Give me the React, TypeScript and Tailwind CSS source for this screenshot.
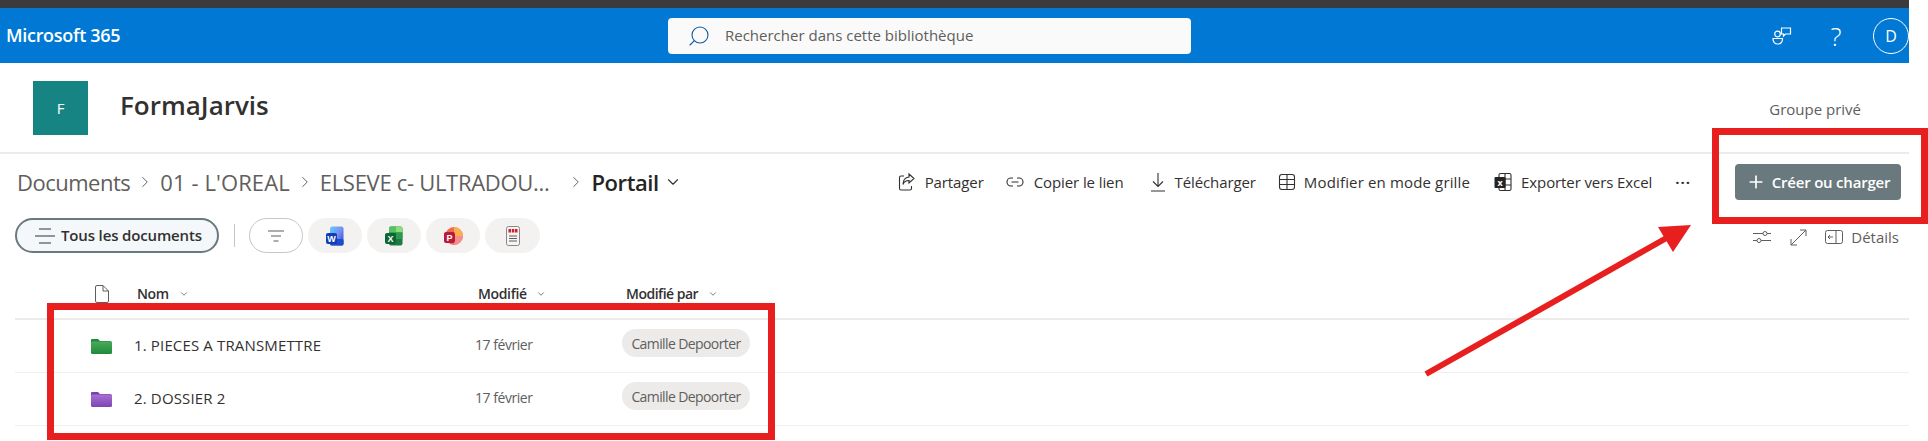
import React from "react";
import { ChevronRight, ChevronDown, Search, Plus } from "lucide-react";

function Feedback() {
  return (
    <svg width="20" height="18" viewBox="0 0 20 18" className="text-white" fill="none" stroke="currentColor" strokeWidth="1.2">
      <circle cx="5.500" cy="7" r="2.800" />
      <path d="M1 11.500h9.500c0 3.500-1.800 5.500-4.700 5.500S1 15 1 11.500z" />
      <path d="M9.500 1h9v6h-5l-2 2V7h-2z" />
    </svg>
  );
}

function ActionIcon({ kind }: { kind: string }) {
  const p = { width: 18, height: 20, viewBox: "0 0 18 20", fill: "none", stroke: "#323130", strokeWidth: 1.1 };
  if (kind === "share")
    return (
      <svg {...p}>
        <path d="M6 4H3a1.500 1.500 0 0 0-1.500 1.500v11A1.500 1.500 0 0 0 3 18h9a1.500 1.500 0 0 0 1.500-1.500V14" />
        <path d="M11 2l5 4.500-5 4.500V8.500c-3 0-5 1-6 4 0-4.500 2-7 6-7.500z" />
      </svg>
    );
  if (kind === "link")
    return (
      <svg {...p}>
        <path d="M7 6H5a4 4 0 0 0 0 8h2M11 6h2a4 4 0 0 1 0 8h-2M5.500 10h7" />
      </svg>
    );
  if (kind === "down")
    return (
      <svg {...p}>
        <path d="M9 1v13M4 9.500l5 5 5-5M2 19h14" />
      </svg>
    );
  if (kind === "grid")
    return (
      <svg {...p}>
        <rect x="1.500" y="2.500" width="15" height="15" rx="2.500" />
        <path d="M1.500 7.500h15M1.500 12.500h15M9 2.500v15" />
      </svg>
    );
  return (
    <svg {...p}>
      <rect x="5" y="1.500" width="12" height="17" rx="1.500" />
      <path d="M5 7h12M5 13h12M11 1.500v17" />
      <rect x="0.500" y="5" width="11" height="11" rx="1" fill="#252423" stroke="none" />
      <text x="6" y="13.500" fontSize="9" fontWeight="700" fill="#fff" stroke="none" textAnchor="middle">x</text>
    </svg>
  );
}

function Action({ kind, label, iconW, ml, track = "tracking-[-0.1px]" }: { kind: string; label: string; iconW: string; ml: string; track?: string }) {
  return (
    <div className={`flex items-center ${ml}`}>
      <div className={`flex justify-start ${iconW}`}>
        <ActionIcon kind={kind} />
      </div>
      <span className={`text-[15px] text-[#323130] whitespace-nowrap ${track}`}>{label}</span>
    </div>
  );
}

function WordIcon() {
  return (
    <svg width="18" height="20" viewBox="0 0 18 20">
      <defs>
        <linearGradient id="wd" x1="0" y1="0" x2="1" y2="1">
          <stop offset="0" stopColor="#5fd0f8" />
          <stop offset="0.5" stopColor="#7b8cf5" />
          <stop offset="1" stopColor="#1a46c4" />
        </linearGradient>
      </defs>
      <rect x="4" y="0.500" width="13.500" height="19" rx="2" fill="url(#wd)" />
      <rect x="4" y="13" width="13.500" height="6.500" rx="1.500" fill="#1c4bd0" />
      <rect x="0" y="7" width="11" height="11" rx="2" fill="#0f3fb0" />
      <text x="5.500" y="15.500" fontSize="9" fontWeight="700" fill="#fff" textAnchor="middle" fontFamily="Liberation Sans">W</text>
    </svg>
  );
}
function ExcelIcon() {
  return (
    <svg width="18" height="20" viewBox="0 0 18 20">
      <rect x="4" y="0.500" width="13.500" height="19" rx="2" fill="#1d7a45" />
      <path d="M4 2.500a2 2 0 0 1 2-2h5v6H4z" fill="#57c264" />
      <path d="M11 0.500h4.500a2 2 0 0 1 2 2v4H11z" fill="#8fdc7a" />
      <path d="M11 6.500h6.500v6.500H11z" fill="#2c9a55" />
      <rect x="0" y="7" width="11" height="11" rx="2" fill="#0d6534" />
      <text x="5.500" y="15.500" fontSize="9" fontWeight="700" fill="#fff" textAnchor="middle" fontFamily="Liberation Sans">X</text>
    </svg>
  );
}
function PptIcon() {
  return (
    <svg width="19" height="20" viewBox="0 0 19 20">
      <circle cx="10" cy="10" r="9" fill="#ef6a50" />
      <path d="M10 1a9 9 0 0 1 9 9h-9z" fill="#fbae4f" />
      <path d="M10 10h9a9 9 0 0 1-9 9z" fill="#f58f8f" />
      <rect x="0" y="6" width="11" height="11" rx="2" fill="#b81c3a" />
      <text x="5.500" y="14.500" fontSize="9" fontWeight="700" fill="#fff" textAnchor="middle" fontFamily="Liberation Sans">P</text>
    </svg>
  );
}
function PdfIcon() {
  return (
    <svg width="14" height="20" viewBox="0 0 14 20">
      <rect x="0.500" y="0.500" width="13" height="19" rx="2" fill="#f5f4f3" stroke="#8a8886" />
      <rect x="2.500" y="3" width="2.500" height="3.500" fill="#d0212b" />
      <rect x="5.800" y="3" width="2.500" height="3.500" fill="#d0212b" />
      <rect x="9" y="3" width="2.500" height="3.500" fill="#d0212b" />
      <path d="M3 10h8M3 12.500h8M3 15h8" stroke="#605e5c" strokeWidth="1" />
    </svg>
  );
}

function Folder({ id, top, bottom, tab }: { id: string; top: string; bottom: string; tab: string }) {
  return (
    <svg width="21" height="15" viewBox="0 0 21 15">
      <defs>
        <linearGradient id={id} x1="0" y1="0" x2="0" y2="1">
          <stop offset="0" stopColor={top} />
          <stop offset="1" stopColor={bottom} />
        </linearGradient>
      </defs>
      <path d="M1 0h6l2 2h10a2 2 0 0 1 2 2v2H0V1a1 1 0 0 1 1-1z" fill={tab} />
      <rect x="0" y="2.500" width="21" height="12.500" rx="1.500" fill={`url(#${id})`} />
    </svg>
  );
}

function Row({ name, folder }: { name: string; folder: React.ReactNode }) {
  return (
    <div className="h-[53px] border-b border-[#f0efee] flex items-center">
      <div className="w-[119px] pl-[76px] flex">{folder}</div>
      <div className="w-[341px] mb-[1px] text-[15px] text-[#323130] tracking-[0.15px] whitespace-nowrap">{name}</div>
      <div className="w-[147px] mb-[4px] text-[14px] text-[#605e5c] tracking-[-0.45px] whitespace-nowrap">17 février</div>
      <div className="w-[128px] h-[28px] mb-[6px] rounded-full bg-[#edebe9] text-[14px] text-[#605e5c] tracking-[-0.6px] flex items-center justify-center whitespace-nowrap">
        Camille Depoorter
      </div>
    </div>
  );
}

const sep = "w-[18px] h-[18px] text-[#605e5c]";

export default function App() {
  return (
    <div className="relative w-[1928px] h-[441px] overflow-hidden bg-white font-['Open_Sans','Noto_Sans',sans-serif]">
      {/* Suite bar */}
      <div className="w-[1909px]">
        <div className="h-[8px] bg-[#3b3b3b]" />
        <div className="h-[55px] bg-[#0078d4] flex items-center">
          <div className="w-[668px] pl-[6px] text-white text-[18px] font-semibold tracking-[-0.3px]">Microsoft 365</div>
          <div className="w-[523px] h-[36px] bg-[#fafafa] rounded-[4px] flex items-center">
            <Search className="w-[24px] h-[24px] text-[#0f5a9e] ml-[19px] -scale-x-100" strokeWidth={1.1} />
            <span className="ml-[14px] text-[15px] text-[#605e5c]">Rechercher dans cette bibliothèque</span>
          </div>
          <div className="flex-1 flex items-center justify-end">
            <Feedback />
            <span className="ml-[36px] w-[16px] text-center text-white text-[26px] leading-[30px] font-light">?</span>
            <div className="ml-[29px] w-[36px] h-[36px] rounded-full border border-white text-white text-[16px] flex items-center justify-center">D</div>
          </div>
        </div>
      </div>

      {/* Site header */}
      <div className="w-[1909px] h-[91px] border-b-2 border-[#edebe9] flex items-start pl-[33px] pt-[18px]">
        <div className="w-[55px] h-[54px] bg-[#158482] flex items-center justify-center text-white text-[15px]">F</div>
        <div className="ml-[32px] mt-[6px] text-[26px] leading-[36px] font-semibold text-[#323130]">FormaJarvis</div>
        <div className="ml-auto mr-[48px] mt-[17px] text-[15px] text-[#605e5c]">Groupe privé</div>
      </div>

      {/* Command bar */}
      <div className="w-[1909px] h-[36px] mt-[10px] flex items-center">
        <div className="flex items-center pl-[17px] text-[22px] text-[#605e5c] whitespace-nowrap">
          <span className="tracking-[-0.5px]">Documents</span>
          <ChevronRight className={`${sep} mx-[6px]`} strokeWidth={1.3} />
          <span className="tracking-[0.1px]">01 - L'OREAL</span>
          <ChevronRight className={`${sep} mx-[6px]`} strokeWidth={1.3} />
          <span className="tracking-[-0.3px]">ELSEVE c- ULTRADOU...</span>
          <ChevronRight className={`${sep} ml-[18px] mr-[6px]`} strokeWidth={1.3} />
          <span className="font-semibold text-[#252423] tracking-[-0.4px]">Portail</span>
          <ChevronDown className="w-[18px] h-[18px] ml-[5px] text-[#323130]" strokeWidth={1.5} />
        </div>
        <div className="ml-auto flex items-center">
          <Action kind="share" label="Partager" iconW="w-[27px]" ml="" />
          <Action kind="link" label="Copier le lien" iconW="w-[28px]" ml="ml-[22px]" />
          <Action kind="down" label="Télécharger" iconW="w-[26px]" ml="ml-[25px]" />
          <Action kind="grid" label="Modifier en mode grille" iconW="w-[26px]" ml="ml-[22px]" track="tracking-[0.15px]" />
          <Action kind="xl" label="Exporter vers Excel" iconW="w-[27px]" ml="ml-[24px]" />
          <span className="ml-[23px] text-[15px] font-bold text-[#323130] tracking-[1px]">···</span>
          <button className="ml-[44px] mr-[8px] w-[166px] h-[36px] rounded-[4px] bg-[#69797e] text-white text-[15px] font-semibold tracking-[-0.2px] flex items-center justify-center">
            <Plus className="w-[20px] h-[20px] mr-[6px]" strokeWidth={2} />
            Créer ou charger
          </button>
        </div>
      </div>

      {/* Filter row */}
      <div className="w-[1909px] h-[35px] mt-[18px] flex items-center pl-[15px]">
        <div className="w-[204px] h-[35px] rounded-full border-2 border-[#69797e] bg-[#f5f8fa] flex items-center">
          <svg width="20" height="16" viewBox="0 0 20 16" className="ml-[18px]" stroke="#323130" strokeWidth="1.100" fill="none">
            <path d="M4 1h12M0 8h20M4 15h12" />
          </svg>
          <span className="ml-[6px] text-[15px] font-semibold text-[#323130] tracking-[-0.15px] whitespace-nowrap">Tous les documents</span>
        </div>
        <div className="w-px h-[23px] bg-[#c8c6c4] ml-[15px]" />
        <div className="ml-[14px] w-[54px] h-[35px] rounded-full border border-[#c8c6c4] flex items-center justify-center">
          <svg width="16" height="12" viewBox="0 0 16 12" stroke="#605e5c" strokeWidth="1.100" fill="none">
            <path d="M0 1h16M3 6h10M5.500 11h5" />
          </svg>
        </div>
        <div className="ml-[5px] w-[54px] h-[35px] rounded-full bg-[#f3f2f1] flex items-center justify-center"><WordIcon /></div>
        <div className="ml-[5px] w-[54px] h-[35px] rounded-full bg-[#f3f2f1] flex items-center justify-center"><ExcelIcon /></div>
        <div className="ml-[5px] w-[54px] h-[35px] rounded-full bg-[#f3f2f1] flex items-center justify-center"><PptIcon /></div>
        <div className="ml-[5px] w-[55px] h-[35px] rounded-full bg-[#f3f2f1] flex items-center justify-center"><PdfIcon /></div>
        <div className="ml-auto mr-[10px] flex items-center mt-[3px]">
          <svg width="18" height="14" viewBox="0 0 18 14" stroke="#605e5c" strokeWidth="1" fill="none">
            <path d="M0 3.500h10M14 3.500h4M0 10.500h4M8 10.500h10" />
            <circle cx="12" cy="3.500" r="2" />
            <circle cx="6" cy="10.500" r="2" />
          </svg>
          <svg width="17" height="17" viewBox="0 0 17 17" className="ml-[19px]" stroke="#605e5c" strokeWidth="1" fill="none">
            <path d="M1 16L16 1M10 1h6v6M1 10v6h6" />
          </svg>
          <svg width="18" height="14" viewBox="0 0 18 14" className="ml-[18px]" stroke="#605e5c" strokeWidth="1" fill="none">
            <rect x="0.500" y="0.500" width="17" height="13" rx="2" />
            <path d="M11 0.500v13M8 7H3M5 5L3 7l2 2" />
          </svg>
          <span className="ml-[8px] text-[15px] text-[#605e5c]">Détails</span>
        </div>
      </div>

      {/* List */}
      <div className="w-[1909px] pl-[15px] mt-[20px]">
        <div className="h-[47px] pt-[11px] border-b-2 border-[#edebe9] flex items-start text-[14px] leading-[20px] font-semibold text-[#323130] tracking-[-0.35px]">
          <div className="ml-[80px] w-[42px] pt-[1px]">
            <svg width="14" height="18" viewBox="0 0 14 18" fill="none" stroke="#605e5c" strokeWidth="1">
              <path d="M2 0.500h6l5.500 5.500v10a1.500 1.500 0 0 1-1.500 1.500H2A1.500 1.500 0 0 1 0.500 16V2A1.500 1.500 0 0 1 2 0.500zM8 0.500V6h5.500" />
            </svg>
          </div>
          <div className="w-[341px] flex items-center">
            Nom <ChevronDown className="w-[10px] h-[10px] ml-[10px]" strokeWidth={1.5} />
          </div>
          <div className="w-[148px] flex items-center">
            Modifié <ChevronDown className="w-[10px] h-[10px] ml-[9px]" strokeWidth={1.5} />
          </div>
          <div className="flex items-center tracking-[-0.5px]">
            Modifié par <ChevronDown className="w-[10px] h-[10px] ml-[10px]" strokeWidth={1.5} />
          </div>
        </div>
        <Row name="1. PIECES A TRANSMETTRE" folder={<Folder id="fg" tab="#1f8a3a" top="#4aaa5c" bottom="#1f8a3a" />} />
        <Row name="2. DOSSIER 2" folder={<Folder id="fp" tab="#7a3fb0" top="#a870d2" bottom="#7f43b5" />} />
      </div>

      {/* Annotations */}
      <div className="absolute left-[1712px] top-[128px] w-[216px] h-[96px] border-[7px] border-[#e81f1f]" />
      <div className="absolute left-[47px] top-[303px] w-[728px] h-[137px] border-[7px] border-[#e81f1f]" />
      <svg className="absolute left-0 top-0 pointer-events-none" width="1928" height="441">
        <path d="M1426 374L1670 236" stroke="#e81f1f" strokeWidth="6" />
        <path d="M1691 225L1658 227L1673 252z" fill="#e81f1f" />
      </svg>
    </div>
  );
}
